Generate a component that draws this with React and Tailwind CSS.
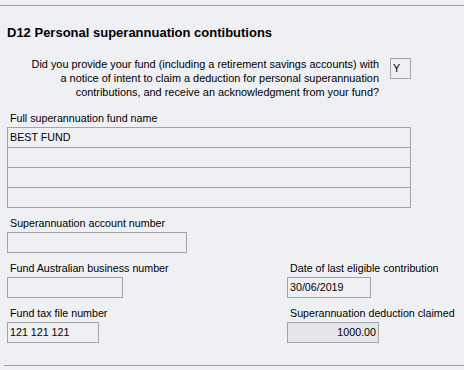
import React from 'react'

const font = { fontFamily: '"Liberation Sans", Arial, sans-serif' }

function Field({ label, value, width, right, disabled }) {
  return (
    <div>
      <div className="mt-[8px] mb-[2px] h-[14px] pl-[3px] leading-[14px] whitespace-nowrap">{label}</div>
      <div
        className={`h-[21px] border border-[#a5a5a5] px-[2px] leading-[19px] ${right ? 'text-right' : ''} ${disabled ? 'bg-[#e6e6ea]' : ''} ${width}`}
      >
        {value}
      </div>
    </div>
  )
}

export default function App() {
  const rows = ['BEST FUND', '', '', '']

  return (
    <div className="h-[370px] w-[464px] overflow-hidden bg-[#eff0f4] text-[10.7px] text-black" style={font}>
      <div className="pt-[5px]">
        <div className="h-px bg-[#a0a0a0]" />
      </div>

      <h2 className="mt-[19px] pl-[7px] text-[13px] font-bold leading-4">D12 Personal superannuation contibutions</h2>

      <div className="mt-[16px] ml-[7px] flex w-[404px]">
        <p className="flex-1 text-right text-[10.9px] leading-[14px]">
          Did you provide your fund (including a retirement savings accounts) with
          <br />
          a notice of intent to claim a deduction for personal superannuation
          <br />
          contributions, and receive an acknowledgment from your fund?
        </p>
        <div className="mt-[1px] ml-[11px] h-[21px] w-[21px] border border-[#a5a5a5] px-[2px] leading-[19px]">Y</div>
      </div>

      <div className="ml-[7px]">
        <div className="mt-[12px] mb-[2px] h-[14px] pl-[3px] leading-[14px]">Full superannuation fund name</div>
        <div className="w-[404px] border border-[#a5a5a5] divide-y divide-[#a5a5a5]">
          {rows.map((r, i) => (
            <div key={i} className="h-[20px] px-[2px] leading-[19px] last:h-[19px]">{r}</div>
          ))}
        </div>

        <Field label="Superannuation account number" value="" width="w-[180px]" />

        <div className="grid grid-cols-[280px_1fr]">
          <Field label="Fund Australian business number" value="" width="w-[116px]" />
          <Field label="Date of last eligible contribution" value="30/06/2019" width="w-[84px]" />
          <Field label="Fund tax file number" value="121 121 121" width="w-[92px]" />
          <Field label="Superannuation deduction claimed" value="1000.00" width="w-[92px]" right disabled />
        </div>
      </div>

      <div className="mt-[22px] ml-[4px] h-px bg-[#a0a0a0]" />
    </div>
  )
}
